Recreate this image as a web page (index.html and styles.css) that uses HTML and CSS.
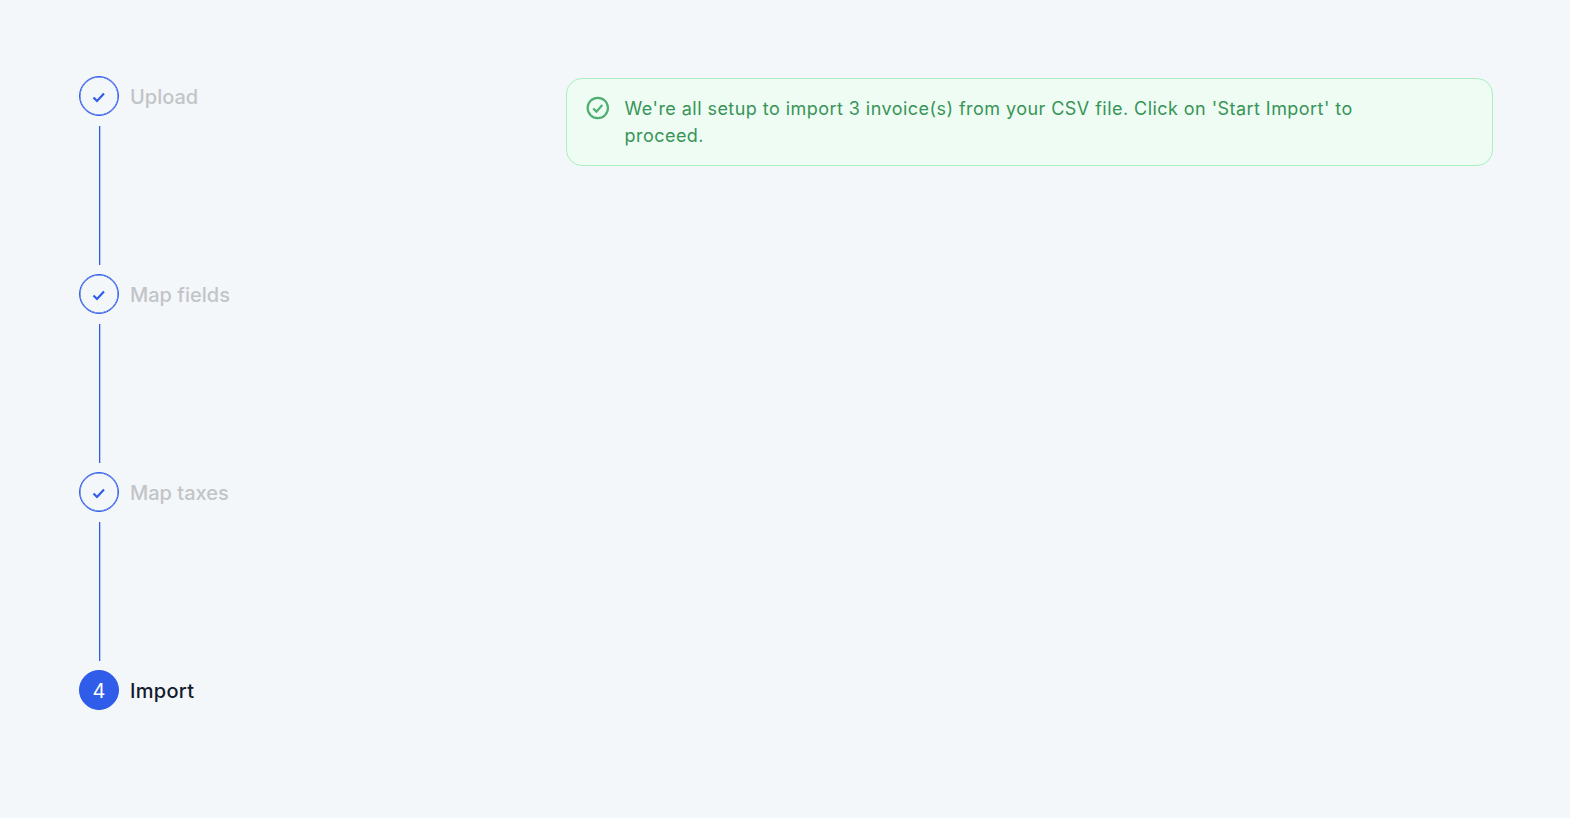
FILE: index.html
```html
<!DOCTYPE html>
<html lang="en">
<head>
  <meta charset="UTF-8" />
  <title>Import invoices</title>
  <link rel="stylesheet" href="styles.css">
</head>
<body>
  <div class="page">
    <ol class="steps">
      <li class="step done">
        <span class="step-circle">
          <svg width="16" height="16" viewBox="0 0 16 16" fill="none"><path d="M2.5 8.5 L6 12 L13 4.5" stroke="#2f5ce9" stroke-width="2.2"/></svg>
        </span>
        <span class="step-label">Upload</span>
      </li>
      <li class="step-line"></li>
      <li class="step done">
        <span class="step-circle">
          <svg width="16" height="16" viewBox="0 0 16 16" fill="none"><path d="M2.5 8.5 L6 12 L13 4.5" stroke="#2f5ce9" stroke-width="2.2"/></svg>
        </span>
        <span class="step-label">Map fields</span>
      </li>
      <li class="step-line"></li>
      <li class="step done">
        <span class="step-circle">
          <svg width="16" height="16" viewBox="0 0 16 16" fill="none"><path d="M2.5 8.5 L6 12 L13 4.5" stroke="#2f5ce9" stroke-width="2.2"/></svg>
        </span>
        <span class="step-label">Map taxes</span>
      </li>
      <li class="step-line"></li>
      <li class="step active">
        <span class="step-circle">4</span>
        <span class="step-label">Import</span>
      </li>
    </ol>

    <div class="content">
      <div class="alert">
        <svg class="alert-icon" width="26" height="26" viewBox="0 0 26 26" fill="none">
          <circle cx="13" cy="13" r="11.2" stroke="#4fae72" stroke-width="2.4"/>
          <path d="M8 13.5 L11.5 17 L18 9.8" stroke="#4fae72" stroke-width="2.4"/>
        </svg>
        <p class="alert-text">We're all setup to import 3 invoice(s) from your CSV file. Click on 'Start Import' to proceed.</p>
      </div>
    </div>
  </div>
</body>
</html>
```

FILE: styles.css
```css
body {
  margin: 0;
  background: #f4f7fa;
  font-family: 'Inter', sans-serif;
}

.page {
  display: flex;
  align-items: flex-start;
  padding: 76px 77px 0 79px;
}

.steps {
  list-style: none;
  margin: 0;
  padding: 0;
  width: 487px;
  flex-shrink: 0;
}

.step {
  display: flex;
  align-items: center;
  gap: 11px;
  height: 40px;
}

.step-circle {
  box-sizing: border-box;
  width: 40px;
  height: 40px;
  padding-top: 2px;
  border-radius: 50%;
  display: flex;
  align-items: center;
  justify-content: center;
  border: 1px solid #2f5ce9;
  box-shadow: inset 0 0 0 0.5px #2f5ce9;
  color: #fff;
  font-size: 20px;
}

.step.active .step-circle {
  background: #2f5ce9;
}

.step-label {
  padding-top: 2px;
  font-size: 20px;
  font-weight: 500;
  color: #c2c4c7;
}

.step.active .step-label {
  color: #141b2d;
  letter-spacing: 0.3px;
}

.step-line {
  width: 1px;
  height: 139px;
  margin: 10px 0 9px 20px;
  background: #2f5ce9;
  box-shadow: 1px 0 0 rgba(47, 92, 233, 0.3);
}

.content {
  flex: 1;
  padding-top: 2px;
}

.alert {
  display: flex;
  align-items: flex-start;
  gap: 15px;
  padding: 16px 130px 16px 19px;
  background: #eefcf3;
  border: 1px solid #aaf0c2;
  border-radius: 16px;
}

.alert-text {
  margin: 0;
  font-size: 18px;
  line-height: 27px;
  font-weight: 400;
  letter-spacing: 0.45px;
  color: #389457;
}
```
